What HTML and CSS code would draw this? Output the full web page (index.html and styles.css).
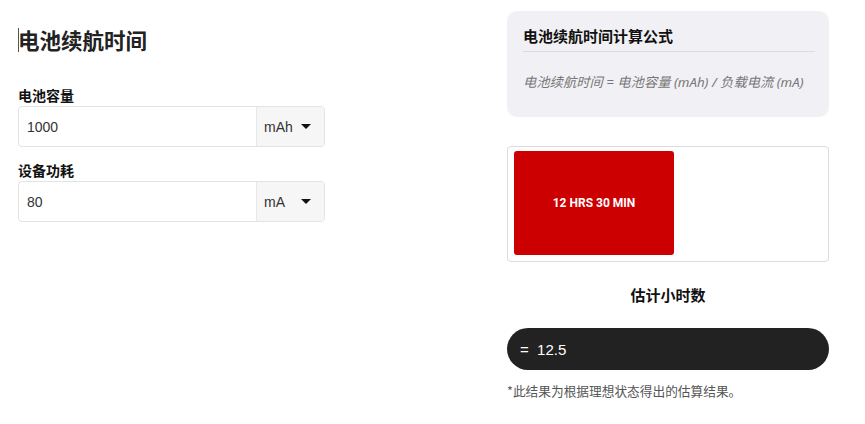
FILE: index.html
```html
<!DOCTYPE html>
<html lang="zh">
<head>
<meta charset="utf-8">
<link rel="stylesheet" href="styles.css">
</head>
<body>
<div class="page">
  <div class="left">
    <h1 class="title"><span class="caret"></span>电池续航时间</h1>
    <div class="field">
      <label class="label">电池容量</label>
      <div class="input-group">
        <div class="input">1000</div>
        <div class="unit"><span>mAh</span><span class="arrow"></span></div>
      </div>
    </div>
    <div class="field">
      <label class="label">设备功耗</label>
      <div class="input-group">
        <div class="input">80</div>
        <div class="unit"><span>mA</span><span class="arrow"></span></div>
      </div>
    </div>
  </div>
  <div class="right">
    <div class="formula">
      <div class="formula-title">电池续航时间计算公式</div>
      <div class="formula-text">电池续航时间 = 电池容量 (mAh) / 负载电流 (mA)</div>
    </div>
    <div class="result-box">
      <div class="result-bar">12 HRS 30 MIN</div>
    </div>
    <div class="est-title">估计小时数</div>
    <div class="pill">=&nbsp;&nbsp;12.5</div>
    <div class="note">*此结果为根据理想状态得出的估算结果。</div>
  </div>
</div>
</body>
</html>
```
FILE: styles.css
```css
html, body {
  margin: 0;
  padding: 0;
  background: #fff;
}
body {
  font-family: "Liberation Sans", "Noto Sans CJK SC", sans-serif;
  color: #222;
}
.page {
  display: flex;
  padding-left: 18px;
  gap: 182px;
}
.left {
  width: 307px;
  padding-top: 26px;
}
.title {
  margin: 0;
  font-family: "Noto Sans CJK SC", sans-serif;
  font-size: 21.5px;
  font-weight: 700;
  line-height: 28px;
  color: #222;
  display: flex;
  align-items: center;
}
.caret {
  width: 1px;
  height: 24px;
  background: #555;
  margin-right: -1px;
}
.field:first-of-type {
  margin-top: 32px;
}
.field + .field {
  margin-top: 14px;
}
.label {
  display: block;
  font-family: "Noto Sans CJK SC", sans-serif;
  font-size: 14px;
  font-weight: 700;
  line-height: 18px;
  padding-bottom: 2px;
  color: #111;
}
.input-group {
  display: flex;
  height: 41px;
  border: 1px solid #e3e3e3;
  border-radius: 4px;
  box-sizing: border-box;
  overflow: hidden;
}
.input {
  flex: 1;
  display: flex;
  align-items: center;
  padding-left: 8px;
  font-size: 14px;
  color: #333;
  border-right: 1px solid #e8e8e8;
}
.unit {
  width: 67px;
  background: #f6f6f6;
  display: flex;
  align-items: center;
  padding-left: 7px;
  box-sizing: border-box;
  font-size: 14px;
  color: #333;
}
.unit span:first-child {
  width: 37px;
}
.arrow {
  width: 0;
  height: 0;
  border-left: 5px solid transparent;
  border-right: 5px solid transparent;
  border-top: 5px solid #111;
}
.right {
  width: 322px;
  padding-top: 11px;
}
.formula {
  background: #f1f1f5;
  border-radius: 10px;
  height: 106px;
  box-sizing: border-box;
  padding: 15px 14px 0 16px;
}
.formula-title {
  font-family: "Noto Sans CJK SC", sans-serif;
  font-size: 15px;
  font-weight: 700;
  line-height: 20px;
  color: #111;
  padding-bottom: 5px;
  border-bottom: 1px solid #dcdce0;
}
.formula-text {
  margin-top: 21px;
  font-family: "Noto Sans", "Noto Sans CJK SC", sans-serif;
  font-style: italic;
  font-size: 13.3px;
  color: #777;
  line-height: 18px;
}
.result-box {
  margin-top: 29px;
  height: 116px;
  border: 1px solid #dcdcdc;
  border-radius: 4px;
  box-sizing: border-box;
  padding: 4px 6px;
}
.result-bar {
  width: 160px;
  height: 104px;
  background: #cc0000;
  border-radius: 3px;
  color: #fff;
  font-family: Roboto, sans-serif;
  font-weight: 700;
  font-size: 12px;
  display: flex;
  align-items: center;
  justify-content: center;
}
.est-title {
  margin-top: 22px;
  text-align: center;
  font-family: "Noto Sans CJK SC", sans-serif;
  font-size: 15px;
  font-weight: 700;
  line-height: 22px;
  color: #111;
}
.pill {
  margin-top: 22px;
  height: 42px;
  border-radius: 21px;
  background: #222;
  color: #fff;
  font-size: 15px;
  display: flex;
  align-items: center;
  padding-left: 13px;
}
.note {
  margin-top: 13px;
  font-family: "Noto Sans CJK SC", sans-serif;
  font-size: 12.7px;
  color: #555;
  line-height: 16px;
}
```
